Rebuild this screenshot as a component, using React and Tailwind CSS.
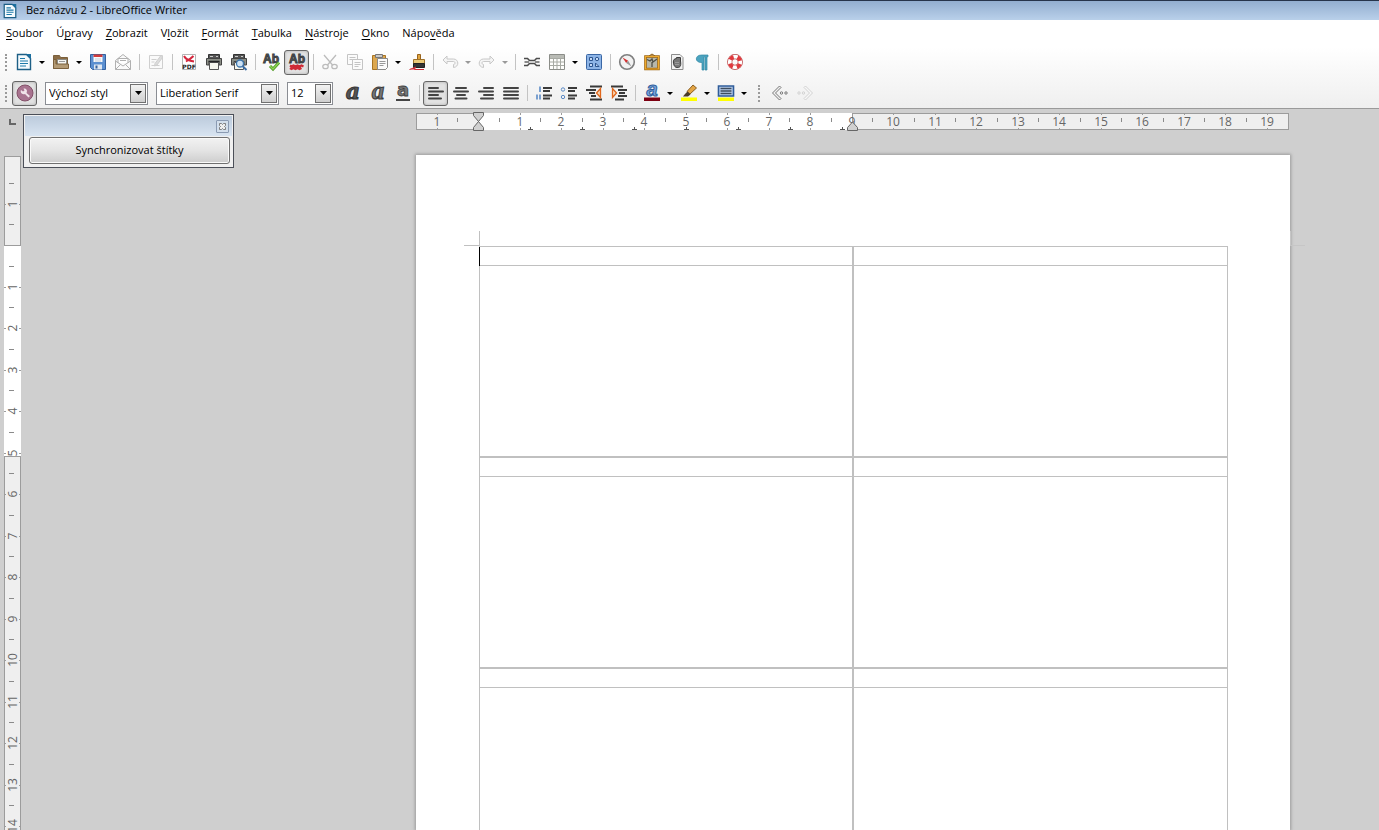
import React, { useState } from 'react';

const svgProps = { viewBox: '0 0 18 18', fill: 'none', 'aria-hidden': true, className: 'shrink-0 overflow-visible' };

const UI_FONT = 'Open Sans, Noto Sans, sans-serif';

// icons, one 18px drawing per command
const ICONS = {
  newDoc: (
    <>
      <path d="M2.5 1.5h9l4 4v11h-13z" fill="#f4fafd" stroke="#1d5f86" strokeWidth="1.4" />
      <path d="M11 1h5v5z" fill="#1b6f9f" />
      <path d="M5 5.5h5M5 8h8M5 10.5h8M5 13h6" stroke="#1d7aa9" strokeWidth="1.2" />
    </>
  ),
  open: (
    <>
      <path d="M1.5 15.500v-13h6l1 2h7v11z" fill="#8a6c45" stroke="#7b603c" />
      <path d="M5.500 6.500h9v6h-9z" fill="#f5f5f2" stroke="#8a8a85" />
      <path d="M7 8.500h6" stroke="#999" />
      <path d="M1.500 15.500v-9h2.500v4.500h12.500v4.500z" fill="#b39a75" stroke="#7b603c" />
    </>
  ),
  save: (
    <>
      <path d="M1.500 1.500h15v15h-13l-2-2z" fill="#5b8fd0" stroke="#35629f" />
      <path d="M4.500 2h9v7h-9z" fill="#fafafa" />
      <path d="M4.500 1.500h9v2.500h-9z" fill="#d23b3b" />
      <path d="M6 6h6M6 8h6" stroke="#c5cfdb" />
      <path d="M5 11.500h8v5h-8z" fill="#dfe7f1" />
      <path d="M6.500 12.500h2v3h-2z" fill="#35629f" />
    </>
  ),
  mail: (
    <g stroke="#b0b0b0">
      <path d="M1.500 7.500L9 1.500l7.500 6v9h-15z" fill="#fafafa" />
      <path d="M4 10V5.500h10V10" fill="#fff" />
      <path d="M1.500 8l7.500 5 7.500-5M1.500 16.500l5-5M16.500 16.500l-5-5M6 7.500h6" />
    </g>
  ),
  edit: (
    <g stroke="#cfcfcf">
      <path d="M2.500 2.500h13v13h-13z" fill="#fafafa" />
      <path d="M4.500 6.500h5M4.500 9h3M4.500 12.500h8" />
      <path d="M8 10.500L13.500 3l2 1.500-5.500 7.500-2.500 1z" fill="#dcdcdc" />
    </g>
  ),
  pdf: (
    <>
      <path d="M2.500 1.500h13v15h-13z" fill="#fff" stroke="#b5b5b5" />
      <path d="M4 3c2 4 6 5 10 5.500M13.500 3c-2 2-5 4-7.500 5.500" stroke="#d3263c" strokeWidth="2" />
      <text x="9" y="16" fontSize="6" fontWeight="bold" textAnchor="middle" fontFamily="DejaVu Sans, sans-serif" fill="#222">PDF</text>
    </>
  ),
  print: (
    <>
      <path d="M3.500 1.500h11v4h-11z" fill="#555" stroke="#333" />
      <path d="M5 3.500h3M11 3.500h2" stroke="#ccc" />
      <path d="M1.500 5.500h15v6.500h-2.500v-3.500h-10V12H1.500z" fill="#8b8e86" stroke="#444" />
      <path d="M4.500 9.500h9v7h-9z" fill="#f6f6ee" stroke="#555" />
      <path d="M3.500 8.500h11" stroke="#222" strokeWidth="1.500" />
    </>
  ),
  preview: (
    <>
      <path d="M3.500 1.500h11v4h-11z" fill="#555" stroke="#333" />
      <path d="M5 3.500h3M11 3.500h2" stroke="#ccc" />
      <path d="M1.500 5.500h15v6.500h-2.500v-3.500h-10V12H1.500z" fill="#8b8e86" stroke="#444" />
      <path d="M4.500 9.500h9v7h-9z" fill="#f6f6ee" stroke="#555" />
      <circle cx="10" cy="10.500" r="3.500" fill="#cfe3f5" stroke="#3d76ad" strokeWidth="1.300" />
      <path d="M12.500 13l4 4" stroke="#3d6ea5" strokeWidth="2" />
    </>
  ),
  spell: (
    <>
      <text x="8" y="10" fontSize="12" fontWeight="bold" textAnchor="middle" fontFamily="Liberation Sans, sans-serif" fill="#555a5d" stroke="#3a3e40" strokeWidth=".9">Ab</text>
      <path d="M7 13l3 3 6-6.500" stroke="#4f9a22" strokeWidth="3" />
      <path d="M7 13l3 3 6-6.500" stroke="#8ed457" strokeWidth="1.300" />
    </>
  ),
  autoSpell: (
    <>
      <text x="9" y="10" fontSize="12" fontWeight="bold" textAnchor="middle" fontFamily="Liberation Sans, sans-serif" fill="#555a5d" stroke="#3a3e40" strokeWidth=".9">Ab</text>
      <path d="M2 12.500l1.500 1 2-1 2 1 2-1 2 1 2-1 2 1M2 15l1.500 1 2-1 2 1 2-1 2 1 2-1" stroke="#cf2a35" strokeWidth="2.200" />
    </>
  ),
  cut: (
    <g stroke="#bcbcbc" strokeWidth="1.300">
      <path d="M3 2l8.500 10M15 2L6.500 12" />
      <ellipse cx="4.500" cy="13.500" rx="2.700" ry="2.200" />
      <ellipse cx="13.500" cy="13.500" rx="2.700" ry="2.200" />
    </g>
  ),
  copy: (
    <g stroke="#c4c4c4">
      <path d="M1.500 1.500h10v10h-10z" fill="#fbfbfb" />
      <path d="M3.500 4.500h6M3.500 6.500h4" />
      <path d="M6.500 6.500h10v10h-10z" fill="#fbfbfb" />
      <path d="M8.500 9.500h6M8.500 11.500h6M8.500 13.500h4" />
    </g>
  ),
  paste: (
    <>
      <path d="M1.500 2.500h13v14h-13z" fill="#dda84f" stroke="#a87423" />
      <path d="M4.500 1.500h7v3h-7z" fill="#c9c9c9" stroke="#777" />
      <path d="M6.500 5.500h10v9l-2 2h-8z" fill="#fbfbfb" stroke="#8a8a8a" />
      <path d="M8.500 8.500h6M8.500 10.500h6M8.500 12.500h4" stroke="#999" />
    </>
  ),
  brush: (
    <>
      <path d="M9.500 1.500h3v5h-3z" fill="#e0a53f" stroke="#99631b" />
      <path d="M5.500 6.500h11v4h-11z" fill="#ecca78" stroke="#a0722a" />
      <path d="M5.500 10.500h11v4h-11z" fill="#343434" stroke="#222" />
      <path d="M1.500 16.500c3-1.500 4-1 6-2.500l-1 2.500h9.500" fill="#cf2a35" stroke="#cf2a35" />
    </>
  ),
  undo: <path d="M6 3L2 7l4 4V8.500h6.500c2 0 2 3 0 3v3c6-.5 5.500-8.500 0-8.500H6z" stroke="#c8c8c8" fill="#f4f4f4" />,
  redo: <path d="M12 3l4 4-4 4V8.500H5.500c-2 0-2 3 0 3v3c-6-.5-5.500-8.500 0-8.500H12z" stroke="#c8c8c8" fill="#f4f4f4" />,
  hyperlink: (
    <>
      <path d="M1 5.500h3.500l2 2h5l2-2H17M1 12.500h3.500l2-2h5l2 2H17" stroke="#4c4c4c" strokeWidth="1.600" />
      <path d="M1.500 9H6M12 9h4.500" stroke="#666" strokeWidth="1.400" />
    </>
  ),
  table: (
    <>
      <path d="M1.500 1.500h15v15h-15z" fill="#fdfdfb" stroke="#8b8d88" />
      <path d="M2 2h14v3H2z" fill="#b9bbb5" />
      <path d="M2 5.500h14M2 9h14M2 12.500h14M5.500 5v11M9 5v11M12.500 5v11" stroke="#a7aaa3" />
    </>
  ),
  gallery: (
    <>
      <rect x="1.500" y="1.500" width="15" height="15" rx="1" fill="#8db4e6" stroke="#3a67a5" />
      <g stroke="#2c558f" fill="#c5daf5">
        <path d="M4.500 4.500h3v3h-3zM4.500 10.500h3v3h-3z" />
        <circle cx="12" cy="6" r="1.700" />
        <path d="M10.500 10v3.500H14z" />
      </g>
    </>
  ),
  compass: (
    <>
      <circle cx="9" cy="9" r="7.300" fill="#f2f2f2" stroke="#7f7f7f" strokeWidth="1.600" />
      <path d="M4.500 4.500l5.700 3.300-2 2.200z" fill="#d33030" />
      <path d="M13.500 13.500l-5.300-3.500 2-2.200z" fill="#999" />
    </>
  ),
  picture: (
    <>
      <path d="M6 3l3-2 3 2" stroke="#8a5b10" />
      <path d="M2.500 3.500h13v12.500h-13z" fill="#b7b7aa" stroke="#9c6410" strokeWidth="2.600" />
      <path d="M2.500 3.500h13v12.500h-13z" stroke="#eeaa2c" strokeWidth="1.200" />
      <path d="M4 6.500l3 1.500 2-2 1 3 4-3M9 9v5" stroke="#4f4f45" strokeWidth="1.300" />
    </>
  ),
  object: (
    <>
      <path d="M3.500 1.500h8.500l3 3v12H3.500z" fill="#f2f2f2" stroke="#8c8c8c" />
      <path d="M5.500 7.500c0-1.500 3-2 3-2V4.500h4V8c1 6-1 6.500-3.500 6.500s-4-3-3.500-7z" fill="#777" stroke="#3c3c3c" />
      <path d="M7 9.500h4M7 11.500h4" stroke="#9a9a9a" />
    </>
  ),
  pilcrow: (
    <path d="M8.500 2H15v1.800h-1V17h-2V3.800h-1V17H9v-7.500C1.500 10 1.500 2 8.500 2z" fill="#4ba3bf" stroke="#2f86a4" strokeWidth=".7" />
  ),
  help: (
    <>
      <circle cx="9" cy="9" r="5.300" stroke="#b94848" strokeWidth="5.200" />
      <circle cx="9" cy="9" r="5.300" stroke="#fff" strokeWidth="3.800" />
      <circle cx="9" cy="9" r="5.300" stroke="#e0393e" strokeWidth="4" strokeDasharray="4.200 4.125" strokeDashoffset="-2" />
    </>
  ),
  wrench: (
    <>
      <circle cx="9" cy="9" r="8" fill="#a8738f" stroke="#835068" />
      <path d="M12.500 13.500L9 10C5.500 11 4 8 5 6l2 1.500L8.500 6.500 7.500 4.500c2-.5 4.500 1 3 4.500l3.500 3z" fill="#f1e4ea" />
    </>
  ),
  bold: <text x="9" y="15" fontSize="22" fontWeight="bold" fontStyle="italic" textAnchor="middle" fontFamily="DejaVu Serif, serif" fill="#555" stroke="#333">a</text>,
  italic: <text x="9" y="15" fontSize="25" fontWeight="bold" fontStyle="italic" textAnchor="middle" fontFamily="Liberation Serif, serif" fill="#777" stroke="#3c3c3c">a</text>,
  underline: (
    <>
      <text x="9" y="12" fontSize="18" fontWeight="bold" textAnchor="middle" fontFamily="DejaVu Sans, sans-serif" fill="#777" stroke="#3c3c3c" strokeWidth=".8">a</text>
      <path d="M2 16h14" stroke="#444" strokeWidth="2" />
    </>
  ),
  left: <path d="M2 4h9M2 7.500h14M2 11h9M2 14.500h12" stroke="#444" strokeWidth="2" strokeLinecap="round" />,
  center: <path d="M4 4h10M2 7.500h14M5 11h8M3.500 14.500h11" stroke="#444" strokeWidth="2" strokeLinecap="round" />,
  right: <path d="M7 4h9M2 7.500h14M7 11h9M4 14.500h12" stroke="#444" strokeWidth="2" strokeLinecap="round" />,
  justify: <path d="M2 4h14M2 7.500h14M2 11h14M2 14.500h14" stroke="#444" strokeWidth="2" strokeLinecap="round" />,
  numbered: (
    <>
      <path d="M8 4h9M8 7h7M8 11.500h9M8 14.500h7" stroke="#3a3a3a" strokeWidth="1.800" />
      <path d="M5 2.500V8M2 10.500v5M5 10.500v5" stroke="#5b8ac6" strokeWidth="1.600" />
    </>
  ),
  bullets: (
    <>
      <path d="M8 4h9M8 7h7M8 11.500h9M8 14.500h7" stroke="#3a3a3a" strokeWidth="1.800" />
      <circle cx="3" cy="5.500" r="1.700" stroke="#5b8ac6" />
      <circle cx="3" cy="13" r="1.700" stroke="#5b8ac6" />
    </>
  ),
  indentLess: (
    <>
      <path d="M5 2.500h12M1 6h10M4 9h6M6 12h5M5 15.500h12" stroke="#3a3a3a" strokeWidth="1.800" />
      <path d="M15.500 4.500v9L11.500 9z" fill="#fbd9b8" stroke="#e0661b" strokeWidth="1.300" />
    </>
  ),
  indentMore: (
    <>
      <path d="M1 2.500h12M8 6h9M9 9h6M8 12h9M5 15.500h9" stroke="#3a3a3a" strokeWidth="1.800" />
      <path d="M2.500 4.500v9l4-4.500z" fill="#fbd9b8" stroke="#e0661b" strokeWidth="1.300" />
    </>
  ),
  fontColor: (
    <>
      <text x="9" y="12" fontSize="20" fontWeight="bold" fontStyle="italic" textAnchor="middle" fontFamily="Liberation Sans, sans-serif" fill="#7ba7dd" stroke="#2f5e9d">a</text>
      <path d="M1 13.500h16V17H1z" fill="#7d0012" />
    </>
  ),
  highlight: (
    <>
      <path d="M1 13.500h16V17H1z" fill="#ffff00" />
      <path d="M7 7.500l6-6.500 3.500 3-6.500 6z" fill="#e3a545" stroke="#8a5f22" />
      <path d="M5 10l2.500-2.500 3 3L8 12.500H3z" fill="#4a3c28" />
    </>
  ),
  charBackground: (
    <>
      <path d="M1 13.500h16V17H1z" fill="#ffff00" />
      <path d="M1.500 2h15v10h-15z" fill="#b9cfee" stroke="#2f5c99" strokeWidth="1.600" />
      <path d="M3.500 4.500h11M3.500 7h11M3.500 9.500h11" stroke="#3d4c5e" strokeWidth="1.400" />
    </>
  ),
  prev: (
    <>
      <path d="M8.500 2l-7 7 7 7 1.500-1.500L4.500 9 10 3.500z" fill="#f0f0f0" stroke="#777" />
      <circle cx="10.500" cy="9" r="1.200" stroke="#777" />
      <circle cx="15" cy="9" r="1.200" stroke="#777" />
    </>
  ),
  next: (
    <>
      <path d="M9.500 2l7 7-7 7L8 14.500 13.500 9 8 3.500z" fill="#f7f7f7" stroke="#d2d2d2" />
      <circle cx="7.500" cy="9" r="1.200" stroke="#d2d2d2" />
      <circle cx="3" cy="9" r="1.200" stroke="#d2d2d2" />
    </>
  ),
};

const MENU = [
  ['', 'S', 'oubor'], ['Ú', 'p', 'ravy'], ['', 'Z', 'obrazit'], ['V', 'l', 'ožit'], ['', 'F', 'ormát'],
  ['', 'T', 'abulka'], ['', 'N', 'ástroje'], ['', 'O', 'kno'], ['Nápo', 'v', 'ěda'],
];

// null is a separator
const STANDARD = [
  { icon: 'newDoc', label: 'Nový', menu: true },
  { icon: 'open', label: 'Otevřít', menu: true },
  { icon: 'save', label: 'Uložit' },
  { icon: 'mail', label: 'Odeslat e-mailem' },
  null,
  { icon: 'edit', label: 'Režim úprav' },
  null,
  { icon: 'pdf', label: 'Exportovat do PDF' },
  { icon: 'print', label: 'Tisk' },
  { icon: 'preview', label: 'Náhled tisku' },
  null,
  { icon: 'spell', label: 'Kontrola pravopisu' },
  { icon: 'autoSpell', label: 'Automatická kontrola', pressed: true },
  null,
  { icon: 'cut', label: 'Vyjmout' },
  { icon: 'copy', label: 'Kopírovat' },
  { icon: 'paste', label: 'Vložit', menu: true },
  { icon: 'brush', label: 'Štětec formátu' },
  null,
  { icon: 'undo', label: 'Zpět', menu: true, dim: true },
  { icon: 'redo', label: 'Znovu', menu: true, dim: true },
  null,
  { icon: 'hyperlink', label: 'Hypertextový odkaz' },
  { icon: 'table', label: 'Tabulka', menu: true },
  { icon: 'gallery', label: 'Kreslení' },
  null,
  { icon: 'compass', label: 'Navigátor' },
  { icon: 'picture', label: 'Galerie' },
  { icon: 'object', label: 'Zdroje dat' },
  { icon: 'pilcrow', label: 'Řídicí znaky' },
  null,
  { icon: 'help', label: 'Nápověda' },
];

const FORMATTING = [
  { icon: 'bold', label: 'Tučné' },
  { icon: 'italic', label: 'Kurzíva' },
  { icon: 'underline', label: 'Podtržené' },
  null,
  { icon: 'left', label: 'Zarovnat vlevo', pressed: true },
  { icon: 'center', label: 'Na střed' },
  { icon: 'right', label: 'Zarovnat vpravo' },
  { icon: 'justify', label: 'Do bloku' },
  null,
  { icon: 'numbered', label: 'Číslování' },
  { icon: 'bullets', label: 'Odrážky' },
  { icon: 'indentLess', label: 'Zmenšit odsazení' },
  { icon: 'indentMore', label: 'Zvětšit odsazení' },
  null,
  { icon: 'fontColor', label: 'Barva písma', menu: true },
  { icon: 'highlight', label: 'Zvýraznění', menu: true },
  { icon: 'charBackground', label: 'Barva pozadí', menu: true },
];

function Icon({ name, size = 18 }) {
  return <svg {...svgProps} width={size} height={size}>{ICONS[name]}</svg>;
}

function Grip({ className }) {
  return (
    <div className={`flex shrink-0 justify-center ${className}`}>
      <div className="h-[17px] border-l-2 border-dotted border-[#9a9a9a]" />
    </div>
  );
}

function Caret({ dim }) {
  return (
    <svg width="6" height="3" viewBox="0 0 6 3" aria-hidden="true">
      <path d="M0 0h6L3 3z" fill={dim ? '#999' : '#000'} />
    </svg>
  );
}

function ToolButton({ icon, label, pressed, menu, dim }) {
  return (
    <>
      <button
        type="button"
        aria-label={label}
        aria-pressed={pressed}
        className={`flex h-[25px] w-[25px] shrink-0 items-center justify-center rounded-[3px] border ${
          pressed ? 'border-[#666] bg-[#e2e2e2] shadow-[inset_0_0_3px_#aaa]' : 'border-transparent'
        }`}
      >
        <Icon name={icon} />
      </button>
      {menu && (
        <button type="button" aria-label={`${label} – nabídka`} className="flex h-[25px] w-3 shrink-0 items-center justify-center">
          <Caret dim={dim} />
        </button>
      )}
    </>
  );
}

function ToolGroup({ items }) {
  return items.map((item, i) => (
    item
      ? <ToolButton key={item.icon} {...item} />
      : <div key={i} className="flex w-2 shrink-0 justify-center"><div className="h-4 w-px bg-[#c3c3c3]" /></div>
  ));
}

function Combo({ label, options, className }) {
  const [value, setValue] = useState(options[0]);
  return (
    <div className={`relative h-[23px] shrink-0 ${className}`}>
      <select
        aria-label={label}
        value={value}
        onChange={e => setValue(e.target.value)}
        className="h-full w-full appearance-none border border-[#8a8d93] bg-white pl-[3px] pr-5 text-[11px] outline-none"
      >
        {options.map(o => <option key={o}>{o}</option>)}
      </select>
      <span className="pointer-events-none absolute inset-y-[2px] right-[2px] flex w-4 items-center justify-center border border-[#707070] bg-linear-to-b from-[#f2f2f2] to-[#cfcfcf]">
        <svg width="7" height="4" viewBox="0 0 7 4" aria-hidden="true"><path d="M0 0h7L3.500 4z" fill="#000" /></svg>
      </span>
    </div>
  );
}

const CM = 41.5;
const range = (from, to) => Array.from({ length: to - from + 1 }, (_, i) => from + i);

function HorizontalRuler() {
  const zero = 62;
  const at = n => Math.round(zero + n * CM);
  return (
    <svg width="874" height="20" className="block overflow-visible" shapeRendering="crispEdges">
      <rect x="62" y="1" width="374" height="17" fill="#fff" />
      <rect x=".5" y="1.500" width="62" height="16" fill="#efefef" stroke="#9c9c9c" />
      <rect x="436.500" y="1.500" width="436" height="16" fill="#efefef" stroke="#9c9c9c" />
      {range(-1, 19).filter(n => n !== 0).map(n => (
        <g key={n}>
          <path d={`M${at(n)}.5 1v2M${at(n)}.5 16v2`} stroke="#9c9c9c" />
          <text x={at(n)} y="14" fontSize="12" textAnchor="middle" fill="#666" fontFamily={UI_FONT}>{Math.abs(n)}</text>
        </g>
      ))}
      {range(-1, 18).map(n => (
        <path key={n} d={`M${at(n + 0.5)}.5 6v4`} stroke="#8a8a8a" />
      ))}
      {range(1, 7).map(n => (
        <path key={n} d={`M${62 + n * 52}.5 15v3M${60 + n * 52} 17.500h5`} stroke="#555" />
      ))}
      <g fill="#d0d0d0" stroke="#666" shapeRendering="auto">
        <path d="M57.500.5h10v3l-5 6-5-6zM57.500 18.500h10v-3l-5-6-5 6z" />
        <path d="M431.500 18.500h10v-3l-5-5.500-5 5.500z" />
      </g>
    </svg>
  );
}

function VerticalRuler() {
  const zero = 89;
  const at = n => Math.round(zero + n * CM);
  return (
    <svg width="17" height="100%" className="block overflow-visible" shapeRendering="crispEdges">
      <rect x="0" y="90" width="17" height="211" fill="#fff" />
      <rect x=".5" y=".5" width="16" height="89" fill="#efefef" stroke="#9c9c9c" />
      <rect x=".5" y="300.500" width="16" height="2000" fill="#efefef" stroke="#9c9c9c" />
      {range(-1, 14).filter(n => n !== 0).map(n => (
        <g key={n}>
          <path d={`M0 ${at(n)}.5h2M15 ${at(n)}.5h2`} stroke="#9c9c9c" />
          <text
            transform={`translate(13 ${at(n)}) rotate(-90)`}
            fontSize="12"
            textAnchor="middle"
            fill="#666"
            fontFamily={UI_FONT}
          >
            {Math.abs(n)}
          </text>
        </g>
      ))}
      {range(-2, 14).map(n => (
        <path key={n} d={`M5 ${at(n + 0.5)}.5h5`} stroke="#8a8a8a" />
      ))}
    </svg>
  );
}

function LabelTable() {
  const cell = 'border-x border-t border-[#c0c0c0] p-0';
  return (
    <table aria-label="Štítky" className="w-full table-fixed border-separate border-spacing-0">
      <colgroup>
        <col className="w-[374px]" />
        <col />
      </colgroup>
      <tbody>
        {range(1, 5).map(row => (
          <React.Fragment key={row}>
            <tr className="h-[19px]"><td className={cell} /><td className={cell} /></tr>
            <tr className="h-48"><td className={`${cell} border-b`} /><td className={`${cell} border-b`} /></tr>
          </React.Fragment>
        ))}
      </tbody>
    </table>
  );
}

function SyncPanel() {
  const [open, setOpen] = useState(true);
  if (!open) return null;
  return (
    <div className="absolute left-[23px] top-[5px] w-[211px] border border-[#4b4f58] bg-[#f0f0f0] p-px">
      <div className="flex h-5 items-center justify-end bg-linear-to-b from-[#bccbdc] to-[#d8e4f1] pr-[3px]">
        <button
          type="button"
          aria-label="Zavřít"
          onClick={() => setOpen(false)}
          className="flex h-[13px] w-[13px] items-center justify-center rounded-[1px] border border-[#8b9bb3] bg-[#d3dfec]"
        >
          <svg width="7" height="7" viewBox="0 0 7 7" aria-hidden="true">
            <path d="M.5.5h2l1 1 1-1h2v2l-1 1 1 1v2h-2l-1-1-1 1h-2v-2l1-1-1-1z" fill="#eee" stroke="#666" strokeWidth=".8" />
          </svg>
        </button>
      </div>
      <div className="pb-[2px] pl-1 pr-[2px] pt-px">
        <button
          type="button"
          className="h-[27px] w-full rounded-[3px] border border-[#707070] bg-linear-to-b from-[#f2f2f2] via-[#e4e4e4] to-[#cdcdcd] text-[11px] shadow-[inset_0_0_0_1px_#fafafa]"
        >
          Synchronizovat štítky
        </button>
      </div>
    </div>
  );
}

export default function App() {
  return (
    <div className="flex h-screen flex-col overflow-hidden bg-[#cfcfcf] font-['Open_Sans','Noto_Sans',sans-serif] text-[11px] text-black">
      {/* Title bar */}
      <header className="flex h-5 shrink-0 items-center gap-2 border-t border-[#27344b] bg-linear-to-b from-[#93aed0] to-[#b9d0ea] pl-[2px]">
        <Icon name="newDoc" size={16} />
        <h1>Bez názvu 2 - LibreOffice Writer</h1>
      </header>

      {/* Menu */}
      <nav className="flex h-[27px] shrink-0 items-center gap-[13px] bg-white pl-[6px]">
        {MENU.map(([pre, key, post]) => (
          <button key={pre + key + post} type="button">
            {pre}<span className="underline underline-offset-2">{key}</span>{post}
          </button>
        ))}
      </nav>

      {/* Toolbars */}
      <div className="shrink-0 border-b border-[#9a9a9a] bg-linear-to-b from-white to-[#efefef]">
        <div role="toolbar" aria-label="Standardní" className="flex h-[30px] items-center">
          <Grip className="w-[11px]" />
          <ToolGroup items={STANDARD} />
        </div>
        <div role="toolbar" aria-label="Formátování" className="flex h-[31px] items-center pt-px">
          <Grip className="w-[11px]" />
          <div className="flex shrink-0 pl-px pr-2"><ToolButton icon="wrench" label="Styly" pressed /></div>
          <div className="flex shrink-0 gap-2 pr-[7px]">
            <Combo label="Styl odstavce" options={['Výchozí styl', 'Nadpis 1']} className="w-[103px]" />
            <Combo label="Název písma" options={['Liberation Serif', 'Liberation Sans']} className="w-[123px]" />
            <Combo label="Velikost písma" options={['12', '14', '16']} className="w-[46px]" />
          </div>
          <ToolGroup items={FORMATTING} />
          <Grip className="w-[17px]" />
          <ToolButton icon="prev" label="Předchozí" />
          <ToolButton icon="next" label="Další" />
        </div>
      </div>

      {/* Workspace */}
      <main className="relative flex min-h-0 flex-1">
        <div className="flex w-[21px] shrink-0 flex-col pl-1">
          <div className="h-[47px] shrink-0 pl-[5px] pt-[10px]">
            <div className="h-[6px] w-[7px] border-b-2 border-l-2 border-[#666]" />
          </div>
          <div className="min-h-0 flex-1"><VerticalRuler /></div>
        </div>
        <div className="flex min-w-0 flex-1 flex-col pl-[395px] pt-[3px]">
          <HorizontalRuler />
          <section className="relative mt-[23px] min-h-0 w-[874px] flex-1 bg-white pl-[63px] pr-[62px] pt-[91px] shadow-[0_0_3px_1px_#9a9a9a]">
            <LabelTable />
            {/* text boundary corners and caret */}
            <div className="absolute left-12 top-[76px] h-[15px] w-4 border-b border-r border-[#c0c0c0]" />
            <div className="absolute left-full top-[76px] h-[15px] w-[15px] border-b border-l border-[#c6c6c6]" />
            <div className="absolute left-[63px] top-[92px] h-[19px] w-px bg-black" />
          </section>
        </div>
        <SyncPanel />
      </main>
    </div>
  );
}
